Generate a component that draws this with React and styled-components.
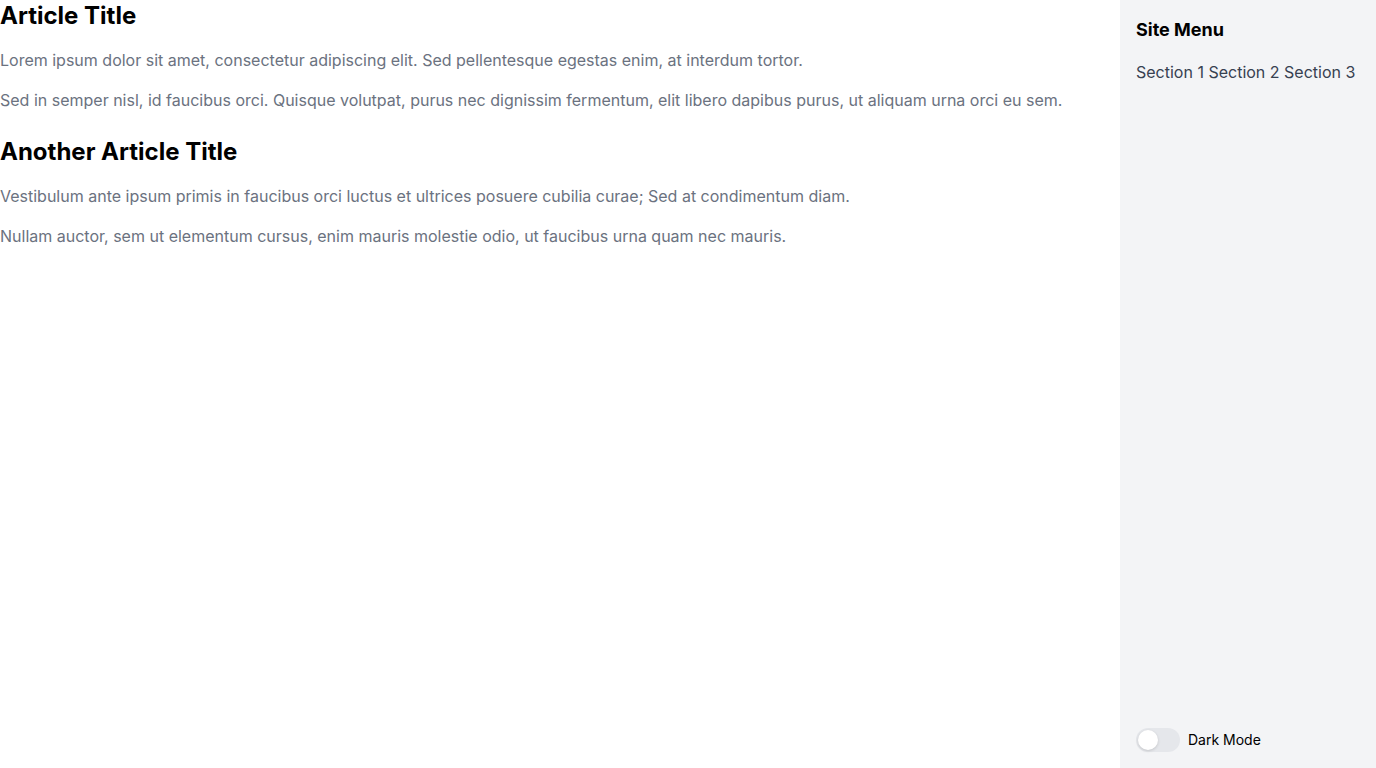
import React, { useState } from 'react';
import styled, { createGlobalStyle } from 'styled-components';

const GlobalStyle = createGlobalStyle`
  html, body {
    margin: 0;
    padding: 0;
    background: #ffffff;
    font-family: 'Inter', 'Noto Sans', sans-serif;
  }
  * {
    box-sizing: border-box;
  }
`;

const Page = styled.div`
  display: flex;
  width: 100%;
  height: 100vh;
`;

const Main = styled.main`
  flex: 1;
  display: flex;
  flex-direction: column;
  gap: 24px;
`;

const Article = styled.article`
  display: flex;
  flex-direction: column;
  gap: 16px;
`;

const Title = styled.h2`
  margin: 0;
  font-size: 24px;
  line-height: 32px;
  font-weight: 700;
  color: #000000;
`;

const Paragraph = styled.p`
  margin: 0;
  font-size: 16px;
  line-height: 24px;
  color: #6b7280;
`;

const Sidebar = styled.aside`
  width: 256px;
  flex-shrink: 0;
  background: #f3f4f6;
  padding: 16px;
  display: flex;
  flex-direction: column;
`;

const MenuTitle = styled.h3`
  margin: 0 0 16px;
  font-size: 18px;
  line-height: 28px;
  font-weight: 700;
  color: #000000;
`;

const MenuLinks = styled.nav`
  font-size: 16px;
  line-height: 24px;
  color: #374151;
`;

const MenuLink = styled.a`
  color: inherit;
  text-decoration: none;
  cursor: pointer;
`;

const ToggleRow = styled.label`
  margin-top: auto;
  display: flex;
  align-items: center;
  gap: 8px;
  cursor: pointer;
`;

const Track = styled.span`
  position: relative;
  width: 44px;
  height: 24px;
  border-radius: 12px;
  background: ${(p) => (p.$on ? '#3b82f6' : '#e5e7eb')};
  transition: background 0.2s;
`;

const Knob = styled.span`
  position: absolute;
  top: 2px;
  left: ${(p) => (p.$on ? '22px' : '2px')};
  width: 20px;
  height: 20px;
  border-radius: 50%;
  background: #ffffff;
  box-shadow: 0 1px 3px rgba(0, 0, 0, 0.15);
  transition: left 0.2s;
`;

const ToggleLabel = styled.span`
  font-size: 14px;
  line-height: 20px;
  color: #000000;
`;

const articles = [
  {
    title: 'Article Title',
    paragraphs: [
      'Lorem ipsum dolor sit amet, consectetur adipiscing elit. Sed pellentesque egestas enim, at interdum tortor.',
      'Sed in semper nisl, id faucibus orci. Quisque volutpat, purus nec dignissim fermentum, elit libero dapibus purus, ut aliquam urna orci eu sem.',
    ],
  },
  {
    title: 'Another Article Title',
    paragraphs: [
      'Vestibulum ante ipsum primis in faucibus orci luctus et ultrices posuere cubilia curae; Sed at condimentum diam.',
      'Nullam auctor, sem ut elementum cursus, enim mauris molestie odio, ut faucibus urna quam nec mauris.',
    ],
  },
];

const App = () => {
  const [dark, setDark] = useState(false);

  return (
    <Page>
      <GlobalStyle />
      <Main>
        {articles.map((article) => (
          <Article key={article.title}>
            <Title>{article.title}</Title>
            {article.paragraphs.map((text) => (
              <Paragraph key={text}>{text}</Paragraph>
            ))}
          </Article>
        ))}
      </Main>
      <Sidebar>
        <MenuTitle>Site Menu</MenuTitle>
        <MenuLinks>
          <MenuLink>Section 1</MenuLink> <MenuLink>Section 2</MenuLink> <MenuLink>Section 3</MenuLink>
        </MenuLinks>
        <ToggleRow onClick={() => setDark(!dark)}>
          <Track $on={dark}>
            <Knob $on={dark} />
          </Track>
          <ToggleLabel>Dark Mode</ToggleLabel>
        </ToggleRow>
      </Sidebar>
    </Page>
  );
};

export default App;
